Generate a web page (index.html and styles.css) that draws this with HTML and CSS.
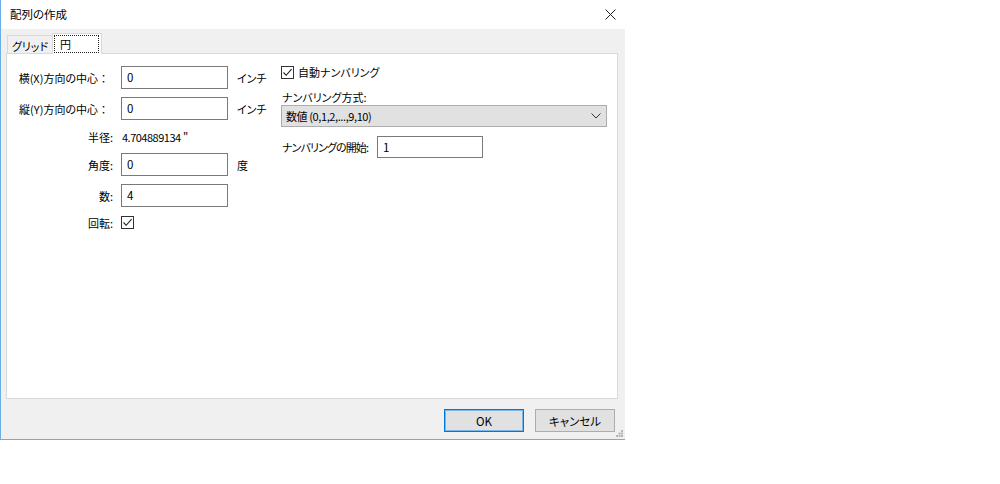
FILE: index.html
```html
<!DOCTYPE html>
<html lang="ja">
<head>
<meta charset="utf-8">
<title>配列の作成</title>
<link rel="stylesheet" href="styles.css">
</head>
<body>
<div class="window">
  <div class="titlebar">
    <span class="title">配列の作成</span>
    <svg class="close" width="11" height="11" viewBox="0 0 11 11">
      <path d="M0.5 0.5 L10.5 10.5 M10.5 0.5 L0.5 10.5" stroke="#1a1a1a" stroke-width="1" fill="none"/>
    </svg>
  </div>
  <div class="body">
    <div class="tabs">
      <div class="tab">グリッド</div>
      <div class="tab active"><span class="focus">円</span></div>
    </div>
    <div class="panel">
      <div class="fields">
        <label class="lbl lbl-center">横(X)方向の中心<span class="wide-colon">：</span></label>
        <input class="txt" type="text" value="0">
        <span class="unit">インチ</span>

        <label class="lbl lbl-center">縦(Y)方向の中心<span class="wide-colon">：</span></label>
        <input class="txt" type="text" value="0">
        <span class="unit">インチ</span>

        <label class="lbl">半径:</label>
        <span class="value"><span class="num">4.704889134</span> "</span>
        <span></span>

        <label class="lbl">角度:</label>
        <input class="txt" type="text" value="0">
        <span class="unit">度</span>

        <label class="lbl">数:</label>
        <input class="txt" type="text" value="4">
        <span></span>

        <label class="lbl">回転:</label>
        <span class="check-cell">
          <span class="checkbox">
            <svg width="11" height="11" viewBox="0 0 11 11"><path d="M1.5 5.5 L4.2 8.3 L9.6 2.2" stroke="#222" stroke-width="1.1" fill="none"/></svg>
          </span>
        </span>
        <span></span>
      </div>

      <div class="numbering">
        <div class="auto">
          <span class="checkbox">
            <svg width="11" height="11" viewBox="0 0 11 11"><path d="M1.5 5.5 L4.2 8.3 L9.6 2.2" stroke="#222" stroke-width="1.1" fill="none"/></svg>
          </span>
          <span>自動ナンバリング</span>
        </div>
        <div class="method-label">ナンバリング方式:</div>
        <div class="select">
          <span class="select-text">数値 (0,1,2,...,9,10)</span>
          <svg width="10" height="6" viewBox="0 0 10 6"><path d="M0.5 0.5 L5 5 L9.5 0.5" stroke="#333" stroke-width="1" fill="none"/></svg>
        </div>
        <div class="start">
          <span class="start-label">ナンバリングの開始:</span>
          <input class="txt" type="text" value="1">
        </div>
      </div>
    </div>
    <div class="actions">
      <button class="btn default">OK</button>
      <button class="btn">キャンセル</button>
    </div>
    <svg class="grip" width="7" height="7" viewBox="0 0 7 7">
      <rect x="5" y="0" width="2" height="2" fill="#b5b5b5"/>
      <rect x="2.5" y="2.5" width="2" height="2" fill="#b5b5b5"/>
      <rect x="5" y="2.5" width="2" height="2" fill="#b5b5b5"/>
      <rect x="0" y="5" width="2" height="2" fill="#b5b5b5"/>
      <rect x="2.5" y="5" width="2" height="2" fill="#b5b5b5"/>
      <rect x="5" y="5" width="2" height="2" fill="#b5b5b5"/>
    </svg>
  </div>
</div>
</body>
</html>
```

FILE: styles.css
```css
* {
  box-sizing: border-box;
}

html, body {
  margin: 0;
  padding: 0;
  background: #ffffff;
}

body {
  font-family: "Noto Sans CJK JP", "Liberation Sans", sans-serif;
  font-size: 11px;
  font-feature-settings: "palt";
  color: #000;
}

.window {
  width: 625px;
  height: 440px;
  border-left: 1px solid #6aaee6;
  border-bottom: 1px solid #6aaee6;
  display: flex;
  flex-direction: column;
}

/* title bar */
.titlebar {
  height: 29px;
  background: #ffffff;
  display: flex;
  align-items: center;
  justify-content: space-between;
  padding: 0 9px 1px 9px;
}

.title {
  font-size: 11.5px;
  line-height: 14px;
}

.close {
  display: block;
}

/* dialog body */
.body {
  position: relative;
  flex: 1;
  background: #f0f0f0;
  padding: 4px 7px 0 5px;
  display: flex;
  flex-direction: column;
}

.tabs {
  display: flex;
  align-items: flex-end;
  height: 20px;
  padding-left: 1px;
  position: relative;
  z-index: 1;
}

.tab {
  height: 18px;
  width: 46px;
  border: 1px solid #d9d9d9;
  border-bottom: none;
  background: #f0f0f0;
  display: flex;
  align-items: center;
  justify-content: center;
  padding-top: 2px;
  line-height: 14px;
}

.tab.active {
  height: 21px;
  width: 50px;
  margin-left: -1px;
  margin-bottom: -1px;
  background: #ffffff;
  align-items: flex-start;
  justify-content: flex-start;
  padding: 1px 0 0 1px;
}

.focus {
  display: block;
  width: 45px;
  height: 18px;
  border: 1px dotted #222;
  padding: 1px 0 0 5px;
  line-height: 14px;
}

.panel {
  height: 346px;
  width: 612px;
  border: 1px solid #d9d9d9;
  background: #ffffff;
  padding-top: 12px;
  display: flex;
  align-items: flex-start;
}

/* left side: centre, radius, angle, count */
.fields {
  width: 274px;
  display: grid;
  grid-template-columns: 106px 107px 1fr;
  grid-template-rows: 23px 23px 17px 23px 23px 15px;
  column-gap: 8px;
  row-gap: 8px;
  align-items: center;
}

.lbl {
  text-align: right;
  white-space: nowrap;
  line-height: 14px;
}

.lbl-center {
  padding-right: 4px;
}

.wide-colon {
  font-feature-settings: normal;
}

.txt {
  width: 107px;
  height: 23px;
  border: 1px solid #7a7a7a;
  background: #fff;
  padding: 0 0 1px 5px;
  font: inherit;
  font-size: 11.5px;
  color: #000;
  outline: none;
  margin: 0;
}

.unit {
  padding-left: 1px;
  white-space: nowrap;
}

.value {
  padding-left: 1px;
  white-space: nowrap;
}

.num {
  letter-spacing: -0.5px;
}

.check-cell {
  display: flex;
  align-items: center;
}

.checkbox {
  width: 13px;
  height: 13px;
  border: 1px solid #333;
  background: #fff;
  display: flex;
  align-items: center;
  justify-content: center;
  flex: none;
}

/* right side: numbering */
.numbering {
  width: 326px;
  display: flex;
  flex-direction: column;
}

.auto {
  display: flex;
  align-items: center;
  gap: 4px;
  height: 13px;
  line-height: 13px;
}

.method-label {
  margin-top: 10px;
  height: 16px;
  line-height: 16px;
  padding-left: 1px;
}

.select {
  height: 22px;
  border: 1px solid #adadad;
  background: #e1e1e1;
  display: flex;
  align-items: center;
  justify-content: space-between;
  padding: 0 5px 0 4px;
}

.select-text {
  letter-spacing: -0.4px;
}

.start {
  margin-top: 9px;
  display: flex;
  align-items: center;
  height: 22px;
}

.start-label {
  width: 96px;
  padding-left: 1px;
  white-space: nowrap;
  letter-spacing: -0.9px;
}

.start .txt {
  height: 22px;
  width: 106px;
}

/* buttons */
.actions {
  display: flex;
  justify-content: flex-end;
  gap: 11px;
  margin-top: 10px;
  padding-right: 3px;
}

.btn {
  width: 80px;
  height: 23px;
  background: #e1e1e1;
  border: 1px solid #adadad;
  font: inherit;
  font-size: 11.5px;
  color: #000;
  padding: 0;
  margin: 0;
}

.btn.default {
  border: 1px solid #0078d7;
  box-shadow: inset 0 0 0 1px #7ab8ec;
}

.grip {
  position: absolute;
  right: 2px;
  bottom: 2px;
}
```
